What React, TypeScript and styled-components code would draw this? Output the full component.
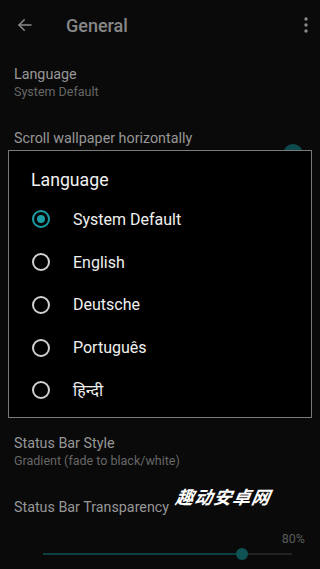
import React from 'react';
import styled, { createGlobalStyle } from 'styled-components';

const GlobalStyle = createGlobalStyle`
  html, body {
    margin: 0;
    padding: 0;
    background: #0a0a0a;
    font-family: Roboto, "Noto Sans", "Noto Sans CJK SC", sans-serif;
  }
`;

const Screen = styled.div`
  position: relative;
  width: 320px;
  height: 569px;
  overflow: hidden;
  background: #0a0a0a;
  display: flex;
  flex-direction: column;
`;

const Toolbar = styled.div`
  height: 50px;
  display: flex;
  align-items: center;
  padding: 0 12px 0 16px;
`;

const Title = styled.div`
  flex: 1;
  margin-left: 32px;
  font-size: 18px;
  font-weight: 500;
  color: #878787;
`;

const Item = styled.div<{ $top: number }>`
  position: relative;
  margin-top: ${(p) => p.$top}px;
  padding: 0 14px;
`;

const ItemTitle = styled.div`
  font-size: 14.3px;
  line-height: 18px;
  color: #979797;
`;

const ItemSub = styled.div`
  font-size: 12.5px;
  line-height: 17px;
  color: #676767;
`;

const SwitchThumb = styled.div`
  position: absolute;
  right: 17px;
  top: 15px;
  width: 20px;
  height: 20px;
  border-radius: 50%;
  background: #0f4b4e;
`;

const SliderRow = styled.div`
  margin-top: 15px;
  padding: 0 28px 0 43px;
  display: flex;
  flex-direction: column;
`;

const SliderValue = styled.div`
  align-self: flex-end;
  margin-right: -13px;
  font-size: 12.5px;
  line-height: 16px;
  color: #5c5c5c;
`;

const Track = styled.div`
  position: relative;
  height: 2px;
  margin-top: 6px;
  background: #222;
`;

const TrackFill = styled.div`
  position: absolute;
  left: 0;
  top: 0;
  bottom: 0;
  background: #0c3f41;
`;

const Thumb = styled.div`
  position: absolute;
  top: -5px;
  width: 12px;
  height: 12px;
  margin-left: -6px;
  border-radius: 50%;
  background: #0e5253;
`;

const Dialog = styled.div`
  position: absolute;
  left: 8px;
  top: 150px;
  width: 302px;
  height: 266px;
  border: 1px solid #7a7a7a;
  background: #000;
  display: flex;
  flex-direction: column;
`;

const DialogTitle = styled.div`
  padding: 18px 0 0 22px;
  font-size: 17.7px;
  line-height: 22px;
  color: #f2f2f2;
`;

const Options = styled.div`
  margin-top: 7px;
  display: flex;
  flex-direction: column;
`;

const Option = styled.div`
  height: 42.75px;
  display: flex;
  align-items: center;
  padding-left: 23px;
`;

const Radio = styled.div<{ $on: boolean }>`
  box-sizing: border-box;
  width: 18px;
  height: 18px;
  border-radius: 50%;
  border: 2px solid ${(p) => (p.$on ? '#1a9da3' : '#d0d0d0')};
  display: flex;
  align-items: center;
  justify-content: center;
  &::after {
    content: '';
    display: ${(p) => (p.$on ? 'block' : 'none')};
    width: 8px;
    height: 8px;
    border-radius: 50%;
    background: #1a9da3;
  }
`;

const OptionLabel = styled.div`
  margin-left: 23px;
  font-size: 16px;
  color: #f0f0f0;
  font-family: Roboto, "Noto Sans", "Noto Sans Devanagari", sans-serif;
`;

const Watermark = styled.div`
  position: absolute;
  left: 176px;
  top: 483px;
  font-family: "Noto Sans CJK SC", sans-serif;
  font-size: 18px;
  font-weight: 700;
  font-style: italic;
  letter-spacing: 1px;
  color: #fff;
  transform: skewX(-10deg);
`;

const languages = ['System Default', 'English', 'Deutsche', 'Português', 'हिन्दी'];

export default function App() {
  const value = 0.8;
  return (
    <>
      <GlobalStyle />
      <Screen>
        <Toolbar>
          <svg width="18" height="18" viewBox="0 0 24 24" fill="none" stroke="#8a8a8a" strokeWidth="2" strokeLinecap="round" strokeLinejoin="round">
            <path d="M20 12H4" />
            <path d="M11 5l-7 7 7 7" />
          </svg>
          <Title>General</Title>
          <svg width="4" height="16" viewBox="0 0 4 16">
            <circle cx="2" cy="2" r="1.7" fill="#8a8a8a" />
            <circle cx="2" cy="8" r="1.7" fill="#8a8a8a" />
            <circle cx="2" cy="14" r="1.7" fill="#8a8a8a" />
          </svg>
        </Toolbar>
        <Item $top={15}>
          <ItemTitle>Language</ItemTitle>
          <ItemSub>System Default</ItemSub>
        </Item>
        <Item $top={29}>
          <ItemTitle>Scroll wallpaper horizontally</ItemTitle>
          <SwitchThumb />
        </Item>
        <Item $top={287}>
          <ItemTitle>Status Bar Style</ItemTitle>
          <ItemSub>Gradient (fade to black/white)</ItemSub>
        </Item>
        <Item $top={29}>
          <ItemTitle>Status Bar Transparency</ItemTitle>
        </Item>
        <SliderRow>
          <SliderValue>80%</SliderValue>
          <Track>
            <TrackFill style={{ width: `${value * 100}%` }} />
            <Thumb style={{ left: `${value * 100}%` }} />
          </Track>
        </SliderRow>
        <Dialog>
          <DialogTitle>Language</DialogTitle>
          <Options>
            {languages.map((l, i) => (
              <Option key={l}>
                <Radio $on={i === 0} />
                <OptionLabel>{l}</OptionLabel>
              </Option>
            ))}
          </Options>
        </Dialog>
        <Watermark>趣动安卓网</Watermark>
      </Screen>
    </>
  );
}
